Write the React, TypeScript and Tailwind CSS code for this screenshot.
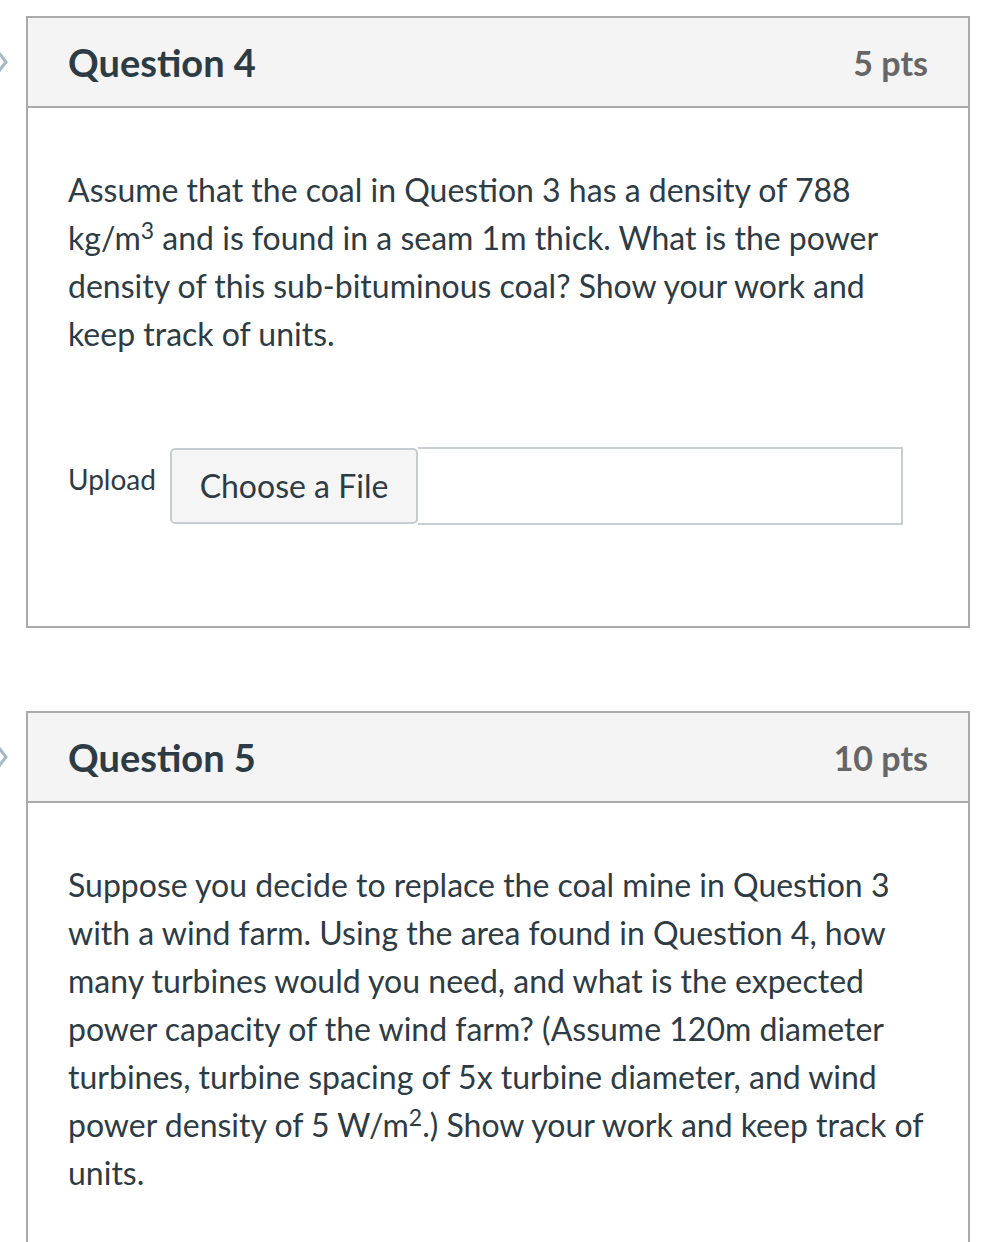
import React from "react";

function Chevron() {
  return (
    <svg width="14" height="30" viewBox="0 0 14 30" className="absolute left-[-5px] top-1/2 -translate-y-1/2">
      <polyline points="1,2 11,15 1,28" fill="none" stroke="#a3b8ca" strokeWidth="3" />
    </svg>
  );
}

function Question({
  title,
  pts,
  children,
}: {
  title: string;
  pts: string;
  children: React.ReactNode;
}) {
  return (
    <div className="relative">
      <div className="ml-[26px] w-[944px] border-2 border-[#aaaaaa] bg-white">
        <div className="relative flex h-[90px] items-center justify-between border-b-2 border-[#aaaaaa] bg-[#f4f4f4] px-[40px]">
          <h2 className="text-[38px] font-bold text-[#2d3b45]">{title}</h2>
          <div className="text-[34px] font-bold text-[#666666]">{pts}</div>
        </div>
        {children}
      </div>
      <div className="absolute left-0 top-0 h-[92px] w-[14px]">
        <Chevron />
      </div>
    </div>
  );
}

export default function App() {
  return (
    <div
      className="h-[1242px] w-[1006px] overflow-hidden bg-white pt-[16px] text-[#2d3b45]"
      style={{ fontFamily: "Lato, 'Liberation Sans', sans-serif" }}
    >
      <Question title="Question 4" pts="5 pts">
        <div className="pb-[101px] pl-[40px] pr-[34px] pt-[58px]">
          <p className="text-[32px] leading-[48px]">
            Assume that the coal in Question 3 has a density of 788 kg/m
            <sup className="text-[23px] leading-none">3</sup> and is found in a seam 1m thick. What is the power
            density of this sub-bituminous coal? Show your work and keep track of units.
          </p>
          <div className="mt-[89px] flex items-start">
            <span className="mt-[11px] w-[102px] text-[28px]">Upload</span>
            <div className="flex items-center">
              <button className="h-[76px] w-[248px] rounded-[5px] border-2 border-[#c7cdd1] bg-[#f5f5f5] text-[32px] text-[#2d3b45]">
                Choose a File
              </button>
              <div className="h-[78px] w-[485px] border-2 border-l-0 border-[#c7cdd1]" />
            </div>
          </div>
        </div>
      </Question>
      <div className="h-[83px]" />
      <Question title="Question 5" pts="10 pts">
        <div className="pb-[120px] pl-[40px] pr-[34px] pt-[58px]">
          <p className="text-[32px] leading-[48px]">
            Suppose you decide to replace the coal mine in Question 3 with a wind farm. Using the area found in
            Question 4, how many turbines would you need, and what is the expected power capacity of the wind
            farm? (Assume 120m diameter turbines, turbine spacing of 5x turbine diameter, and wind power density
            of 5 W/m<sup className="text-[23px] leading-none">2</sup>.) Show your work and keep track of units.
          </p>
        </div>
      </Question>
    </div>
  );
}
